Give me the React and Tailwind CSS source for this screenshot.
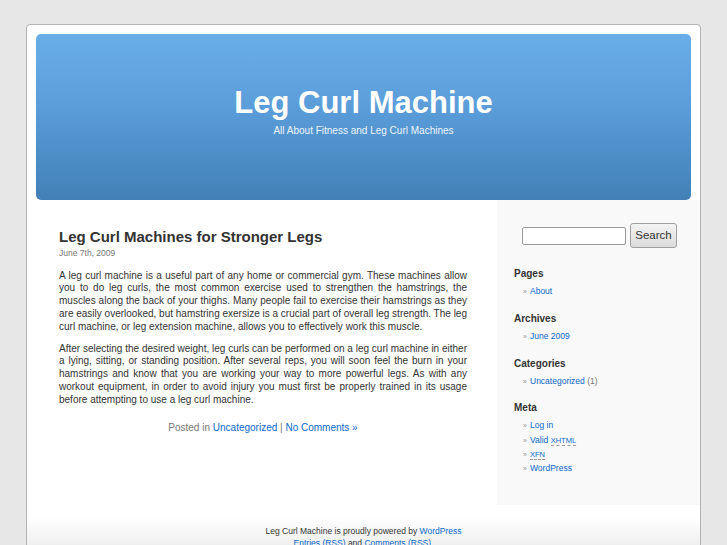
// App.jsx
import React from "react";

const font = { fontFamily: '"Liberation Sans", Arial, sans-serif' };

function Widget({ title, children, first }) {
  return (
    <div className={first ? "mt-[20px]" : "mt-[14.5px]"}>
      <h2 className="text-[10px] leading-[12px] font-bold text-[#333]">{title}</h2>
      <ul className="mt-[4px] pl-[9px]">{children}</ul>
    </div>
  );
}

function Item({ children }) {
  return (
    <li className="block h-[14.33px] overflow-visible whitespace-nowrap text-[8.5px] leading-[14.33px]">
      <span className="inline-block w-[7px] text-[7px] text-[#999]">»</span>
      {children}
    </li>
  );
}

export default function App() {
  return (
    <div className="min-h-[545px] bg-[#e7e7e7] pt-[24px] overflow-hidden" style={font}>
      <div className="ml-[26px] w-[675px] rounded-[4px] border border-[#b3b3b3] bg-white">
        {/* Header */}
        <div className="px-[9px] pt-[9px]">
          <div className="flex h-[166px] flex-col items-center rounded-[5px] bg-[linear-gradient(to_bottom,#6aaee8,#5c9fdb_40%,#4280b7)] pt-[51px]">
            <h1 className="text-[31px] leading-[36px] font-bold text-white">Leg Curl Machine</h1>
            <p className="mt-[4px] text-[10px] leading-[12px] text-[#eef4fb]">
              All About Fitness and Leg Curl Machines
            </p>
          </div>
        </div>

        {/* Content + sidebar */}
        <div className="flex">
          <main className="w-[470px] pl-[32px] pr-[30px] pt-[28px] text-[#333]">
            <h2 className="text-[15px] leading-[18px] font-bold text-[#333]">
              Leg Curl Machines for Stronger Legs
            </h2>
            <div className="mt-[1px] text-[8.5px] leading-[12px] text-[#777]">June 7th, 2009</div>

            <p className="mt-[10.5px] text-justify text-[10px] leading-[12.8px] text-[#333]">
              A leg curl machine is a useful part of any home or commercial gym. These machines allow
              you to do leg curls, the most common exercise used to strengthen the hamstrings, the
              muscles along the back of your thighs. Many people fail to exercise their hamstrings as
              they are easily overlooked, but hamstring exersize is a crucial part of overall leg
              strength. The leg curl machine, or leg extension machine, allows you to effectively work
              this muscle.
            </p>
            <p className="mt-[9.2px] text-justify text-[10px] leading-[12.8px] text-[#333]">
              After selecting the desired weight, leg curls can be performed on a leg curl machine in
              either a lying, sitting, or standing position. After several reps, you will soon feel the
              burn in your hamstrings and know that you are working your way to more powerful legs. As
              with any workout equipment, in order to avoid injury you must first be properly trained
              in its usage before attempting to use a leg curl machine.
            </p>

            <p className="mt-[14px] text-center text-[10px] leading-[13px] text-[#777]">
              Posted in <a className="text-[#0b68c8]">Uncategorized</a> |{" "}
              <a className="text-[#0b68c8]">No Comments »</a>
            </p>
          </main>

          <aside className="w-[203px] bg-[#f9f9f9] pl-[17px] pt-[23px] pb-[29px]">
            <form className="ml-[8px] flex items-center gap-[4px]">
              <input
                type="text"
                className="h-[18px] w-[104px] rounded-[2px] border border-[#9a9a9a] bg-white"
              />
              <button
                type="button"
                className="h-[25px] w-[47px] rounded-[3px] border border-[#a0a0a0] bg-[linear-gradient(to_bottom,#f4f4f4,#dcdcdc)] text-[11.5px] text-[#333]"
              >
                Search
              </button>
            </form>

            <Widget title="Pages" first>
              <Item><a className="text-[#0b68c8]">About</a></Item>
            </Widget>
            <Widget title="Archives">
              <Item><a className="text-[#0b68c8]">June 2009</a></Item>
            </Widget>
            <Widget title="Categories">
              <Item>
                <a className="text-[#0b68c8]">Uncategorized</a>{" "}
                <span className="text-[#777]">(1)</span>
              </Item>
            </Widget>
            <Widget title="Meta">
              <Item><a className="text-[#0b68c8]">Log in</a></Item>
              <Item>
                <a className="text-[#0b68c8]">
                  Valid{" "}
                  <abbr className="border-b border-dashed border-[#999] text-[7.5px] leading-[9px] no-underline">XHTML</abbr>
                </a>
              </Item>
              <Item>
                <a className="text-[#0b68c8]">
                  <abbr className="border-b border-dashed border-[#999] text-[7.5px] leading-[9px] no-underline">XFN</abbr>
                </a>
              </Item>
              <Item><a className="text-[#0b68c8]">WordPress</a></Item>
            </Widget>
          </aside>
        </div>

        {/* Footer */}
        <footer className="bg-[linear-gradient(to_bottom,#fff_0px,#fff_12px,#ebebeb_48px)] pt-[20px] pb-[20px] text-center text-[8.5px] leading-[12.5px] text-[#333]">
          <p>
            Leg Curl Machine is proudly powered by <a className="text-[#0b68c8]">WordPress</a>
          </p>
          <p>
            <a className="text-[#0b68c8]">Entries (RSS)</a> and{" "}
            <a className="text-[#0b68c8]">Comments (RSS)</a>.
          </p>
        </footer>
      </div>
    </div>
  );
}
